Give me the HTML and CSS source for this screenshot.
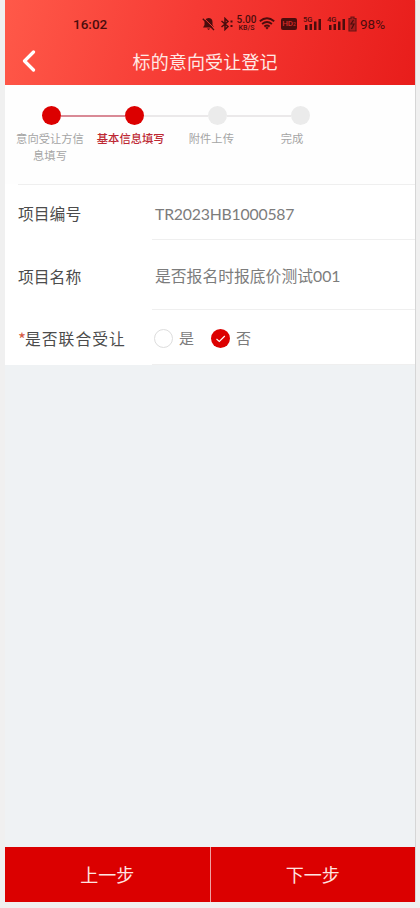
FILE: index.html
```html
<!DOCTYPE html>
<html lang="zh-CN">
<head>
<meta charset="utf-8">
<title>标的意向受让登记</title>
<link rel="stylesheet" href="styles.css">
</head>
<body>
<div class="phone">
  <header class="header">
    <div class="status">
      <span class="time">16:02</span>
      <svg class="bell" width="13" height="14" viewBox="0 0 13 14"><path d="M6.500 1C4 1.200 2.500 3 2.500 5.300V8L1 10.500H12L10.500 8V5C10.500 2.500 9 1 6.500 1ZM5 11.500H8.200L6.600 13Z" fill="currentColor"/><path d="M1.500 .8L12.800 11.800" stroke="#f93c37" stroke-width="1"/><path d="M.8 1.800L12 13" stroke="currentColor" stroke-width="1.300"/></svg>
      <svg class="bt" width="14" height="14" viewBox="0 0 14 14" fill="none" stroke="currentColor" stroke-width="1.500"><path d="M1.500 4L8 9.500L5 12.500V1.500L8 4.500L1.500 10"/><path d="M10.500 4.500H12.500M10.500 9H12.500" stroke-width="2"/></svg>
      <span class="speed"><b>5.00</b><b class="unit">KB/S</b></span>
      <svg class="wifi" width="16" height="13" viewBox="0 0 16 13" fill="none" stroke="currentColor" stroke-width="1.800"><path d="M.8 4.300Q8-1.700 15.200 4.300M3.100 7Q8 3 12.900 7M5.300 9.500Q8 7.500 10.700 9.500"/><path d="M6.300 10.700Q8 9.500 9.700 10.700L8 12.500Z" fill="currentColor" stroke="none"/></svg>
      <span class="hd">HD<i>2</i></span>
      <span class="signal"><small>5G</small><svg width="19" height="14" viewBox="0 0 19 14"><path d="M2 8h2.500v5H2zM6.500 7H9v6H6.500zM11 4.500h2.500V13H11zM15.500 2H18v11h-2.500z" fill="currentColor"/></svg></span>
      <span class="signal second"><small>4G</small><svg width="19" height="14" viewBox="0 0 19 14"><path d="M2 8h2.500v5H2zM6.500 7H9v6H6.500zM11 4.500h2.500V13H11zM15.500 2H18v11h-2.500z" fill="currentColor"/></svg></span>
      <svg class="battery" width="9" height="16" viewBox="0 0 9 16"><path d="M3 1H6V2.500H8V15H1V2.500H3Z" fill="#a51d1d" stroke="#6b1414" stroke-width="1.200"/><path d="M5.500 4L3 8H6L3.500 13" fill="none" stroke="currentColor" stroke-width="1.200"/></svg>
      <span class="percent">98%</span>
    </div>
    <div class="navbar">
      <svg class="back" width="14" height="22" viewBox="0 0 14 22"><path d="M11.500 2L2.500 11L11.500 20" fill="none" stroke="#fff" stroke-width="3.200" stroke-linecap="round" stroke-linejoin="round"/></svg>
      <h1>标的意向受让登记</h1>
    </div>
  </header>
  <main>
    <section class="steps">
      <div class="track"><i class="dot on"></i><i class="line on"></i><i class="dot on"></i><i class="line"></i><i class="dot"></i><i class="line"></i><i class="dot"></i></div>
      <div class="names"><span>意向受让方信息填写</span><span class="current">基本信息填写</span><span>附件上传</span><span>完成</span></div>
    </section>
    <section class="form">
      <div class="row number"><label>项目编号</label><div class="value">TR2023HB1000587</div></div>
      <div class="row name"><label>项目名称</label><div class="value">是否报名时报底价测试001</div></div>
      <div class="row joint"><label><em>*</em>是否联合受让</label>
        <div class="value"><i class="radio"></i><span>是</span>
          <i class="radio checked"><svg width="19" height="19" viewBox="0 0 19 19"><path d="M5.500 10L8.300 12.500L13.800 7" fill="none" stroke="#fff" stroke-width="1.100"/></svg></i><span>否</span></div>
      </div>
    </section>
  </main>
  <footer class="actions"><button>上一步</button><button>下一步</button></footer>
</div>
</body>
</html>
```
FILE: styles.css
```css
* { box-sizing: border-box; }
body {
  margin: 0;
  height: 908px;
  padding: 0 5px 6px;
  background: #f0f0f0;
  font-family: "Noto Sans CJK SC", sans-serif;
  overflow: hidden;
}
i, em { font-style: normal; }
.phone {
  height: 902px;
  display: flex;
  flex-direction: column;
  background: #eff2f4;
  box-shadow: 1px 0 0 -0.5px #bbb;
}
.header {
  height: 85px;
  background: linear-gradient(105deg, #ff5949 0%, #f63a34 45%, #e81d1b 100%);
}
.status {
  height: 39px;
  padding: 8px 0 0 68px;
  display: flex;
  align-items: center;
  color: #4b0d0d;
}
.status svg, .status span { flex: none; }
.time { width: 129px; font: 500 13.500px/16px Roboto, sans-serif; color: #4b0d0d; }
.bt { margin-left: 5px; }
.speed {
  width: 21px;
  margin-left: 2px;
  display: flex;
  flex-direction: column;
  align-items: center;
  font: 500 10px/9px Roboto, sans-serif;
}
.speed b { font-weight: 500; }
.speed .unit { font-size: 7px; line-height: 8px; }
.wifi { margin-left: 2px; }
.hd {
  width: 16px;
  height: 12px;
  margin-left: 6px;
  border-radius: 2px;
  background: #4b0d0d;
  color: #d52b29;
  font: 500 8px/12px Roboto, sans-serif;
  text-align: center;
}
.hd i { font-size: 5px; }
.signal { position: relative; height: 14px; margin-left: 6px; }
.signal svg { display: block; }
.signal.second { margin-left: 5px; }
.signal small { position: absolute; left: 0; top: -1px; font: 500 7.500px/8px Roboto, sans-serif; }
.battery { margin-left: 2px; }
.percent { margin-left: 3px; font: 400 13.500px/16px Roboto, sans-serif; }
.navbar {
  height: 44px;
  padding-left: 17px;
  display: flex;
  align-items: center;
}
.back { margin-right: 96.500px; }
h1 { margin: 0; color: #ffe9e5; font-size: 18px; line-height: 26px; font-weight: 400; letter-spacing: .15px; }
main { flex: 1; }
.steps { height: 99px; padding-top: 21px; background: #fefefe; }
.track { display: flex; align-items: center; padding-left: 37px; }
.dot { width: 19px; height: 19px; border-radius: 50%; background: #ebebeb; }
.line { width: 64px; height: 2px; background: #ebe9ea; }
.dot.on { background: #dc0000; }
.line.on { background: #d98a96; }
.names {
  display: flex;
  gap: 12.700px;
  padding: 5px 0 0 11px;
  color: #a5a5a5;
  font-size: 11.300px;
  line-height: 17px;
  text-align: center;
}
.names span { width: 68px; }
.names .current { color: #bd2833; font-weight: 500; }
.form { background: #fff; }
.row {
  display: flex;
  padding-left: 13px;
  color: #4c4c4c;
  font-size: 15.800px;
}
.row label { display: flex; align-items: center; width: 134px; }
.value {
  flex: 1;
  display: flex;
  align-items: center;
  padding-left: 3px;
  border-bottom: 1px solid #efefef;
  color: #7c7c7c;
  font-family: Lato, "Noto Sans CJK SC", sans-serif;
}
.number { height: 56px; background: linear-gradient(#efefef, #efefef) 13px 0 / 100% 1px no-repeat; }
.number .value { letter-spacing: -.2px; padding-top: 3px; }
.number label { padding-top: 2px; }
.name { height: 70px; }
.name label, .name .value { padding-top: 2px; }
.joint { height: 55px; }
.joint label { letter-spacing: 1px; padding-top: 2px; }
.joint em { color: #d45a43; letter-spacing: 0; font-size: 17px; width: 7px; }
.joint .value { padding: 3px 0 0 2px; font-size: 15px; }
.radio { width: 19px; height: 19px; border: 1px solid #ddd; border-radius: 50%; }
.radio + span { margin: -2px 17px 0 6px; }
.radio.checked { border: 0; background: #dc0000; }
.radio svg { display: block; }
.actions { height: 55px; display: flex; background: #db0000; }
.actions button {
  flex: 1;
  border: 0;
  padding: 0 0 2px;
  background: none;
  color: #ffe5e2;
  font: 400 18px "Noto Sans CJK SC", sans-serif;
}
.actions button + button { border-left: 1px solid #f0a0a0; }
```
